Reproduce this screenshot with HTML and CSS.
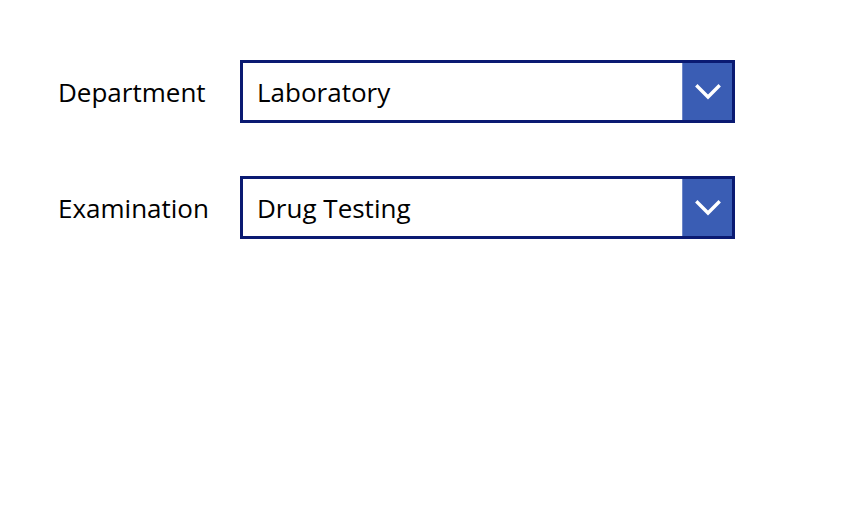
FILE: index.html
```html
<!DOCTYPE html>
<html>
<head>
<meta charset="utf-8">
<link rel="stylesheet" href="styles.css">
</head>
<body>
<div class="form">
  <div class="row">
    <div class="label">Department</div>
    <div class="select">
      <div class="value">Laboratory</div>
      <div class="btn">
        <svg width="26" height="16" viewBox="0 0 26 16"><path d="M2.5 2.5 L13 13 L23.5 2.5" fill="none" stroke="#fff" stroke-width="3.4" stroke-linecap="square"/></svg>
      </div>
    </div>
  </div>
  <div class="row">
    <div class="label">Examination</div>
    <div class="select">
      <div class="value">Drug Testing</div>
      <div class="btn">
        <svg width="26" height="16" viewBox="0 0 26 16"><path d="M2.5 2.5 L13 13 L23.5 2.5" fill="none" stroke="#fff" stroke-width="3.4" stroke-linecap="square"/></svg>
      </div>
    </div>
  </div>
</div>
</body>
</html>
```
FILE: styles.css
```css
html, body {
  margin: 0;
  padding: 0;
  background: #fff;
}
body {
  width: 853px;
  height: 506px;
  font-family: "Open Sans", sans-serif;
  color: #000;
}
.form {
  padding: 60px 0 0 58px;
  display: flex;
  flex-direction: column;
  gap: 53px;
}
.row {
  display: flex;
  align-items: center;
}
.label {
  width: 182px;
  font-size: 26px;
  line-height: 63px;
  padding-top: 1px;
  height: 62px;
}
.select {
  width: 489px;
  height: 57px;
  border: 3px solid #0a1a72;
  display: flex;
  align-items: stretch;
}
.value {
  flex: 1;
  padding-left: 14px;
  padding-top: 1px;
  font-size: 26px;
  line-height: 56px;
}
.btn {
  width: 49px;
  background: #3a5db4;
  border-left: 1px solid #6d86c7;
  display: flex;
  align-items: center;
  justify-content: center;
}
.btn svg {
  display: block;
}
```
